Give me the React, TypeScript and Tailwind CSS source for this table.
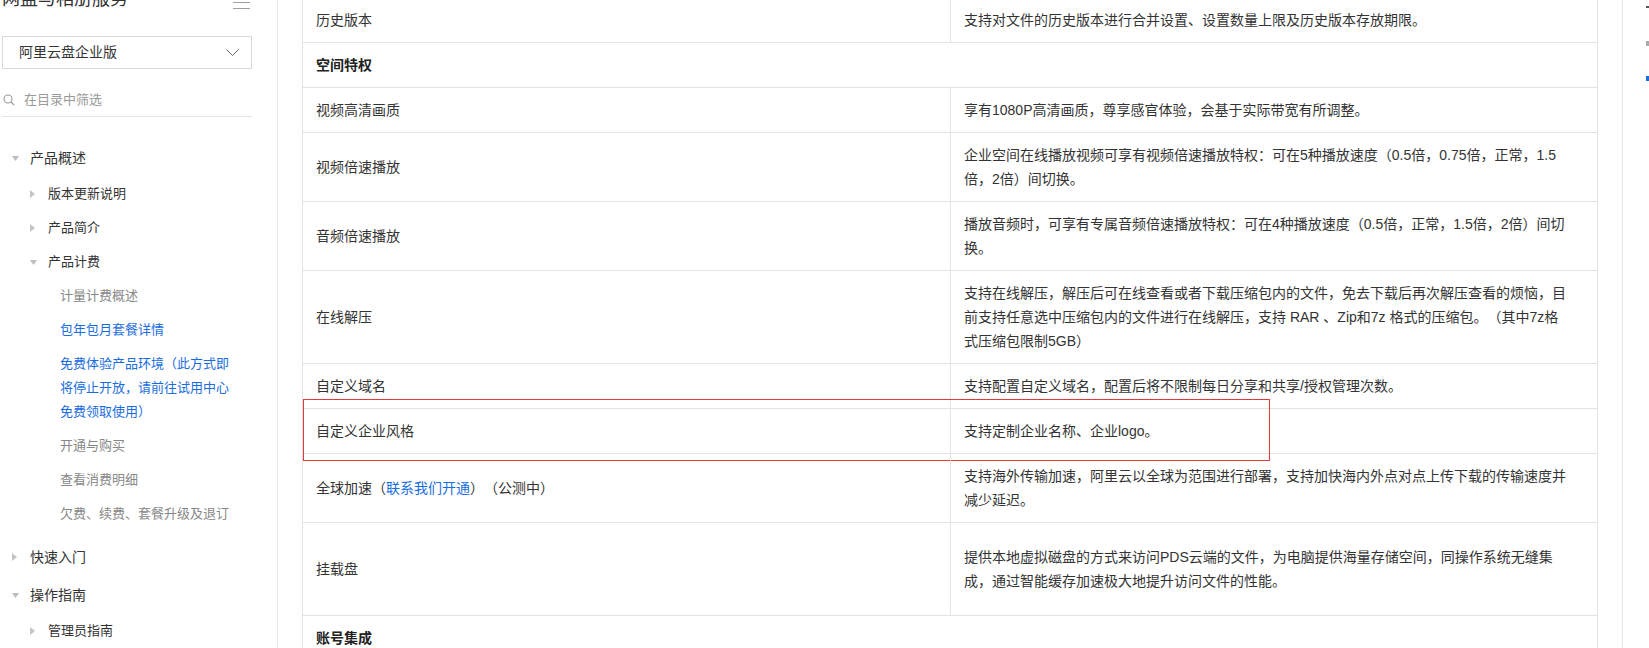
import React from "react";

const FONT = { fontFamily: '"Liberation Sans", "Noto Sans CJK SC", sans-serif' };

type Row =
  | { kind: "head"; title: string }
  | { kind: "row"; name: React.ReactNode; desc: string[]; tall?: boolean; marked?: boolean };

// 描述按原页面的换行位置拆开
const rows: Row[] = [
  { kind: "row", name: "历史版本", desc: ["支持对文件的历史版本进行合并设置、设置数量上限及历史版本存放期限。"] },
  { kind: "head", title: "空间特权" },
  { kind: "row", name: "视频高清画质", desc: ["享有1080P高清画质，尊享感官体验，会基于实际带宽有所调整。"] },
  {
    kind: "row",
    name: "视频倍速播放",
    desc: ["企业空间在线播放视频可享有视频倍速播放特权：可在5种播放速度（0.5倍，0.75倍，正常，1.5", "倍，2倍）间切换。"],
  },
  {
    kind: "row",
    name: "音频倍速播放",
    desc: ["播放音频时，可享有专属音频倍速播放特权：可在4种播放速度（0.5倍，正常，1.5倍，2倍）间切", "换。"],
  },
  {
    kind: "row",
    name: "在线解压",
    desc: [
      "支持在线解压，解压后可在线查看或者下载压缩包内的文件，免去下载后再次解压查看的烦恼，目",
      "前支持任意选中压缩包内的文件进行在线解压，支持 RAR 、Zip和7z 格式的压缩包。（其中7z格",
      "式压缩包限制5GB）",
    ],
  },
  { kind: "row", name: "自定义域名", desc: ["支持配置自定义域名，配置后将不限制每日分享和共享/授权管理次数。"] },
  { kind: "row", name: "自定义企业风格", desc: ["支持定制企业名称、企业logo。"], marked: true },
  {
    kind: "row",
    name: (
      <>
        全球加速（<span className="text-[#1a6ddf]">联系我们开通</span>）（公测中）
      </>
    ),
    desc: ["支持海外传输加速，阿里云以全球为范围进行部署，支持加快海内外点对点上传下载的传输速度并", "减少延迟。"],
  },
  {
    kind: "row",
    name: "挂载盘",
    desc: [
      "提供本地虚拟磁盘的方式来访问PDS云端的文件，为电脑提供海量存储空间，同操作系统无缝集",
      "成，通过智能缓存加速极大地提升访问文件的性能。",
    ],
    tall: true,
  },
  { kind: "head", title: "账号集成" },
];

function Caret({ open }: { open?: boolean }) {
  return open ? (
    <svg width="7" height="5" viewBox="0 0 7 5" className="block">
      <path d="M0 0h7L3.5 5z" fill="#bdbdbd" />
    </svg>
  ) : (
    <svg width="5" height="8" viewBox="0 0 5 8" className="block">
      <path d="M0 0l5 4-5 4z" fill="#c4c4c4" />
    </svg>
  );
}

function Level1({ label, open }: { label: string; open?: boolean }) {
  return (
    <div className="flex h-[38px] items-center pl-[10px] text-[14px] text-[#333]">
      <span className="flex w-[18px] items-center">
        <Caret open={open} />
      </span>
      {label}
    </div>
  );
}

function Level2({ label, open }: { label: string; open?: boolean }) {
  return (
    <div className="flex h-[34px] items-center pl-[28px] text-[13px] text-[#333]">
      <span className="flex w-[18px] items-center">
        <Caret open={open} />
      </span>
      {label}
    </div>
  );
}

function Level3({ label, active }: { label: string; active?: boolean }) {
  return (
    <div
      className={`max-w-[236px] py-[5px] pl-[58px] text-[13px] leading-[24px] ${
        active ? "text-[#1a6ddf]" : "text-[#888]"
      }`}
    >
      {label}
    </div>
  );
}

function Sidebar() {
  return (
    <aside className="w-[278px] shrink-0 border-r border-[#e8e8e8] pl-[2px] pr-[25px]">
      <div className="-mt-[15px] flex items-start justify-between">
        <span className="text-[18px] leading-[28px] text-[#333]">网盘与相册服务</span>
        <svg width="17" height="14" viewBox="0 0 17 14" className="mr-[2px] mt-[10px]">
          <path d="M0 1.5h17M0 7.5h17M0 13.5h17" stroke="#9e9e9e" strokeWidth="1.2" />
        </svg>
      </div>

      <div className="mt-[23px] flex h-[33px] items-center justify-between border border-[#d9d9d9] pl-[16px] pr-[12px] text-[14px] text-[#333]">
        <span>阿里云盘企业版</span>
        <svg width="13" height="7" viewBox="0 0 13 7">
          <path d="M0.5 0.5l6 6 6-6" fill="none" stroke="#666" strokeWidth="1" />
        </svg>
      </div>

      <div className="mt-[14px] flex h-[34px] items-center border-b border-[#e6e6e6] text-[13px] text-[#9a9a9a]">
        <svg width="12" height="12" viewBox="0 0 12 12" className="ml-[1px] mr-[9px]">
          <circle cx="5" cy="5" r="4" fill="none" stroke="#9a9a9a" strokeWidth="1.1" />
          <path d="M8 8l3.2 3.2" stroke="#9a9a9a" strokeWidth="1.2" />
        </svg>
        在目录中筛选
      </div>

      <nav className="mt-[22px]">
        <Level1 label="产品概述" open />
        <div className="mb-[7px]">
          <Level2 label="版本更新说明" />
          <Level2 label="产品简介" />
          <Level2 label="产品计费" open />
          <Level3 label="计量计费概述" />
          <Level3 label="包年包月套餐详情" active />
          <Level3 label="免费体验产品环境（此方式即将停止开放，请前往试用中心免费领取使用）" active />
          <Level3 label="开通与购买" />
          <Level3 label="查看消费明细" />
          <Level3 label="欠费、续费、套餐升级及退订" />
        </div>
        <Level1 label="快速入门" />
        <Level1 label="操作指南" open />
        <Level2 label="管理员指南" />
      </nav>
    </aside>
  );
}

function Table() {
  return (
    <div className="-mt-[3px] border-x border-t border-[#e3e3e3] text-[14px] leading-[24px] text-[#333]">
      {rows.map((r, i) =>
        r.kind === "head" ? (
          <div key={i} className="border-b border-[#e3e3e3] px-[13px] py-[10px] font-bold text-[#222]">
            {r.title}
          </div>
        ) : (
          <div key={i} className="relative grid grid-cols-[648px_1fr] border-b border-[#e3e3e3]">
            <div className="flex items-center border-r border-[#e3e3e3] px-[13px] py-[10px]">{r.name}</div>
            <div className={`flex flex-col justify-center px-[13px] ${r.tall ? "py-[22px]" : "py-[10px]"}`}>
              {r.desc.map((line, j) => (
                <span key={j} className="whitespace-nowrap">
                  {line}
                </span>
              ))}
            </div>
            {r.marked && (
              <div className="pointer-events-none absolute -top-[10px] left-0 h-[62px] w-[967px] border border-[#e8363a]" />
            )}
          </div>
        )
      )}
    </div>
  );
}

export default function App() {
  return (
    <div className="flex h-[648px] w-full overflow-hidden bg-white [text-spacing-trim:space-all]" style={FONT}>
      <Sidebar />
      <main className="min-w-0 flex-1 px-[24px]">
        <Table />
      </main>
      <div className="w-[27px] shrink-0 border-l border-[#e6e6e6] pl-[23px]">
        <div className="mt-[6px] h-[2px] w-[3px] bg-[#555]" />
        <div className="mt-[33px] h-[5px] w-[3px] bg-[#aaa]" />
        <div className="mt-[30px] h-[5px] w-[3px] bg-[#1a6ddf]" />
      </div>
    </div>
  );
}
